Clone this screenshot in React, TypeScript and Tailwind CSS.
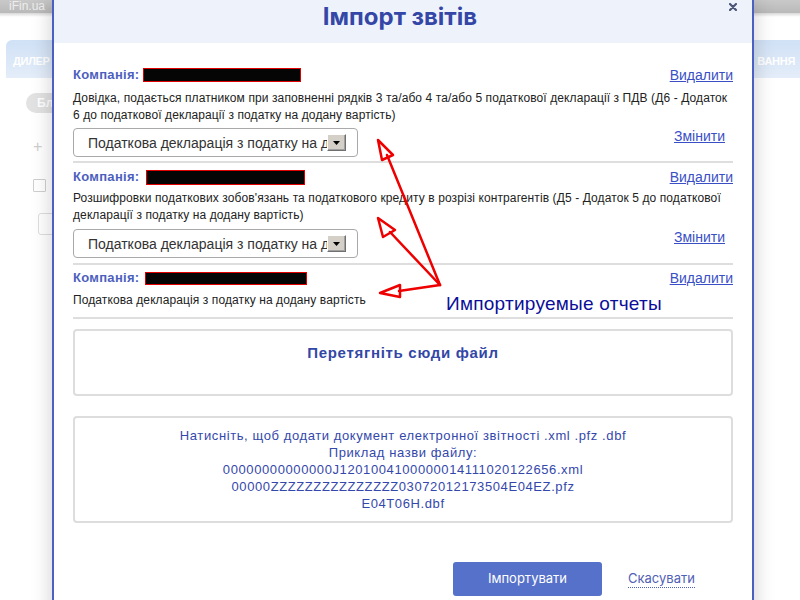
import React from "react";

function CompanyRow({ box }: { box: string }) {
  return (
    <div className="flex h-[18px] items-center justify-between">
      <div className="flex items-center">
        <span className="text-[13px] font-bold tracking-[0.3px] text-[#4d5fbe]">Компанія:</span>
        <span className={box}></span>
      </div>
      <a className="text-[14px] leading-[16px] text-[#3a4fc6] underline">Видалити</a>
    </div>
  );
}

function SelectRow({ mt }: { mt: string }) {
  return (
    <div className={"flex items-start justify-between " + mt}>
      <div className="flex h-[29px] w-[285px] items-center rounded-[4px] border border-[#a9a9a9] bg-white pl-[14px] pr-[11px]">
        <div className="w-[241px] overflow-hidden whitespace-nowrap text-[14px] leading-[16px] text-[#333]">
          Податкова декларація з податку на д
        </div>
        <div className="flex h-[17px] w-[19px] items-center justify-center border border-t-white border-l-white border-b-[#6f6f6f] border-r-[#6f6f6f] bg-[#d4d0c8] shadow-[inset_-1px_-1px_0_#a0a0a0]">
          <svg width="7" height="4" viewBox="0 0 7 4">
            <polygon points="0,0 7,0 3.5,4" fill="#000" />
          </svg>
        </div>
      </div>
      <a className="mr-[8px] mt-[0px] text-[14px] leading-[16px] text-[#3a4fc6] underline">Змінити</a>
    </div>
  );
}

export default function App() {
  return (
    <div className="relative h-[600px] w-[800px] overflow-hidden bg-white font-['Liberation_Sans',Arial,sans-serif]">
      {/* background page */}
      <div className="flex flex-col">
        <div className="h-[13px] bg-gradient-to-b from-[#c9c9c9] to-[#b9b9b9] pl-[9px] text-[12px] leading-[13px] text-[#eeeeee]">
          iFin.ua
        </div>
        <div className="h-[4px] bg-gradient-to-b from-[#d8d8d8] to-white"></div>
        <div className="h-[23px]"></div>
        <div className="flex h-[38px] justify-between">
          <div className="ml-[6px] w-[48px] rounded-tl-[6px] bg-gradient-to-b from-[#d0e1f6] to-[#e4edf9] pl-[7px] pt-[13px] text-[11px] font-bold tracking-[-0.3px] text-white">
            ДИЛЕР
          </div>
          <div className="w-[46px] bg-gradient-to-b from-[#d0e1f6] to-[#e4edf9] pr-[5px] pt-[13px] text-right text-[11px] font-bold tracking-[-0.3px] text-white">
            ВАННЯ
          </div>
        </div>
        <div className="h-[15px]"></div>
        <div className="ml-[26px] flex h-[20px] w-[60px] items-center rounded-full bg-[#e2e2e2] pl-[11px] text-[12px] font-bold text-white">
          Бл
        </div>
        <div className="ml-[33px] mt-[26px] text-[16px] leading-[16px] text-[#cfcfcf]">+</div>
        <div className="ml-[33px] mt-[24px] h-[13px] w-[13px] rounded-[1px] border border-[#cfcfcf]"></div>
        <div className="ml-[38px] mt-[21px] h-[22px] w-[30px] rounded-[3px] border border-[#dedede]"></div>
      </div>

      {/* modal */}
      <div className="absolute left-[52px] top-0 h-[640px] w-[702px] border-x-2 border-[#4c60c4] bg-white shadow-[0_0_20px_rgba(0,0,0,0.2)]">
        <div className="relative h-[43px] bg-[#eef2fb] pr-[6px] pt-[2px] text-center">
          <div className="font-['Inter',sans-serif] text-[24px] font-bold leading-[30px] text-[#3447a6]">Імпорт звітів</div>
          <svg className="absolute right-[15px] top-[3px]" width="8" height="8" viewBox="0 0 8 8">
            <path d="M1 1 L7 7 M7 1 L1 7" stroke="#4a5578" strokeWidth="2.2" strokeLinecap="round" />
          </svg>
        </div>

        <div className="px-[19px]">
          {/* section 1 */}
          <div className="mt-[23px]">
            <CompanyRow box="ml-[4px] h-[14px] w-[158px] border border-[#e00000] bg-[#050505]" />
          </div>
          <div className="mt-[6px] text-[12px] leading-[17px] tracking-[0.1px] text-[#222]">
            Довідка, подається платником при заповненні рядків 3 та/або 4 та/або 5 податкової декларації з ПДВ (Д6 - Додаток
            <br />6 до податкової декларації з податку на додану вартість)
          </div>
          <SelectRow mt="mt-[4px]" />
          <div className="mt-[4px] h-[2px] bg-[#dedede]"></div>

          {/* section 2 */}
          <div className="mt-[5px]">
            <CompanyRow box="ml-[7px] h-[15px] w-[159px] border border-[#e00000] bg-[#050505]" />
          </div>
          <div className="mt-[4px] text-[12px] leading-[17px] tracking-[0.1px] text-[#222]">
            Розшифровки податкових зобов'язань та податкового кредиту в розрізі контрагентів (Д5 - Додаток 5 до податкової
            <br />декларації з податку на додану вартість)
          </div>
          <SelectRow mt="mt-[5px]" />
          <div className="mt-[5px] h-[2px] bg-[#dedede]"></div>

          {/* section 3 */}
          <div className="mt-[4px]">
            <CompanyRow box="ml-[6px] h-[13px] w-[162px] border border-[#e00000] bg-[#050505]" />
          </div>
          <div className="mt-[5px] text-[12px] leading-[17px] tracking-[0.1px] text-[#222]">
            Податкова декларація з податку на додану вартість
          </div>
          <div className="mt-[8px] h-[2px] bg-[#dedede]"></div>

          {/* drop zone */}
          <div className="mt-[10px] flex h-[67px] justify-center rounded-[4px] border-2 border-[#dddddd] pt-[13px]">
            <span className="text-[15px] font-bold leading-[17px] tracking-[0.7px] text-[#3347a6]">Перетягніть сюди файл</span>
          </div>

          {/* info */}
          <div className="mt-[20px] flex h-[107px] flex-col items-center justify-center rounded-[4px] border-2 border-[#dddddd] text-[13px] leading-[17px] tracking-[0.6px] text-[#3448ac]">
            <div>Натисніть, щоб додати документ електронної звітності .xml .pfz .dbf</div>
            <div>Приклад назви файлу:</div>
            <div>00000000000000J1201004100000014111020122656.xml</div>
            <div>00000ZZZZZZZZZZZZZZZ03072012173504E04EZ.pfz</div>
            <div>E04T06H.dbf</div>
          </div>

          {/* buttons */}
          <div className="mt-[39px] flex items-center">
            <div className="ml-[380px] flex h-[34px] w-[149px] items-center justify-center rounded-[3px] bg-[#5671c9] font-['Inter',sans-serif] text-[13px] text-white">
              Імпортувати
            </div>
            <a className="ml-[26px] border-b border-dotted border-[#5060b5] font-['Inter',sans-serif] text-[13px] leading-[17px] text-[#5060b5]">
              Скасувати
            </a>
          </div>
        </div>
      </div>

      {/* annotation */}
      <svg className="absolute left-0 top-0" width="800" height="600" viewBox="0 0 800 600">
        <g stroke="#ee0000" strokeWidth="2.5" fill="none" strokeLinejoin="round" strokeLinecap="round">
          <path d="M440 285 L387 155" />
          <path d="M378 140 L382 160 L393 155 Z" />
          <path d="M440 285 L390 232" />
          <path d="M378 218 L383 237 L395 230 Z" />
          <path d="M440 285 L399 291" />
          <path d="M380 293 L400 285 L400 297 Z" />
        </g>
      </svg>
      <div className="absolute left-[446px] top-[294px] whitespace-nowrap text-[19px] leading-[19px] tracking-[0.25px] text-[#0b0f9a]">
        Импортируемые отчеты
      </div>
    </div>
  );
}
